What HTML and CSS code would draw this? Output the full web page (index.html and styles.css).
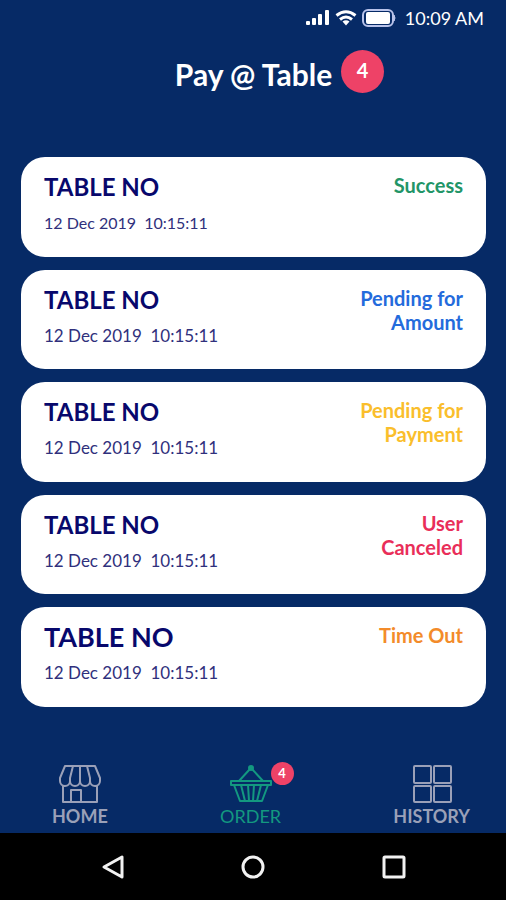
FILE: index.html
```html
<!DOCTYPE html>
<html lang="en">
<head>
<meta charset="utf-8">
<meta name="viewport" content="width=device-width, initial-scale=1">
<title>Pay @ Table</title>
<link rel="stylesheet" href="styles.css">
</head>
<body>
<div class="app">
  <div class="status-bar">
    <svg width="26" height="18" viewBox="0 0 26 18" fill="#fff" aria-hidden="true"><rect x="1" y="12" width="4" height="4" rx="1"/><rect x="7" y="9" width="4" height="7" rx="1"/><rect x="13" y="5" width="4" height="11" rx="1"/><rect x="20" y="1" width="4" height="15" rx="1"/></svg>
    <svg width="22" height="18" viewBox="0 0 22 18" fill="none" stroke="#fff" stroke-width="3" aria-hidden="true"><path d="M1.500 6.500Q11-1 20.500 6.500M5 10.500Q11 5.500 17 10.500"/><path d="M7.500 12.500Q11 10 14.500 12.500L11 16.500Z" fill="#fff" stroke="none"/></svg>
    <svg width="36" height="20" viewBox="0 0 36 20" aria-hidden="true"><rect x="2" y="2" width="30" height="16" rx="5" fill="none" stroke="#b9c3ea" stroke-width="2"/><rect x="5" y="4" width="24" height="12" rx="2" fill="#fff"/><path d="M33 7q2 3 0 6z" fill="#b9c3ea" stroke="#b9c3ea"/></svg>
    <span class="clock">10:09 AM</span>
  </div>
  <header class="header">
    <h1 class="title">Pay @ Table</h1>
    <span class="badge">4</span>
  </header>
  <main class="orders">
    <article class="card">
      <div class="details"><h2 class="name">TABLE NO</h2><p class="date date-compact">12 Dec 2019&nbsp; 10:15:11</p></div>
      <p class="state success">Success</p>
    </article>
    <article class="card">
      <div class="details"><h2 class="name">TABLE NO</h2><p class="date">12 Dec 2019&nbsp; 10:15:11</p></div>
      <p class="state amount">Pending for Amount</p>
    </article>
    <article class="card">
      <div class="details"><h2 class="name">TABLE NO</h2><p class="date">12 Dec 2019&nbsp; 10:15:11</p></div>
      <p class="state payment">Pending for Payment</p>
    </article>
    <article class="card">
      <div class="details"><h2 class="name">TABLE NO</h2><p class="date">12 Dec 2019&nbsp; 10:15:11</p></div>
      <p class="state canceled">User<br>Canceled</p>
    </article>
    <article class="card">
      <div class="details"><h2 class="name name-large">TABLE NO</h2><p class="date">12 Dec 2019&nbsp; 10:15:11</p></div>
      <p class="state timeout">Time Out</p>
    </article>
  </main>
  <nav class="tabs" aria-label="Main">
    <a class="tab" href="#home">
      <svg width="44" height="40" viewBox="0 0 44 40" fill="none" stroke="currentColor" stroke-width="2" stroke-linejoin="round" aria-hidden="true"><path d="M7 2H37L42 14V17A5 5 0 0 1 32 17A5 5 0 0 1 22 17A5 5 0 0 1 12 17A5 5 0 0 1 2 17V14ZM15 2L12 14V17M22 2V17M29 2L32 14V17M5 22V38H39V22M13 38V26H23V38"/></svg>
      <span>HOME</span>
    </a>
    <a class="tab active" href="#order">
      <span class="icon-box">
        <svg width="44" height="40" viewBox="0 0 44 40" fill="none" stroke="currentColor" stroke-width="2" stroke-linejoin="round" aria-hidden="true"><circle cx="22" cy="4" r="2" fill="currentColor"/><path d="M21 5L10 17M23 5L34 17M2 17H42V21H2ZM5 21L11 37H33L39 21M12 21L16 37M19 21L20 37M25 21L24 37M32 21L28 37"/></svg>
        <span class="tab-badge">4</span>
      </span>
      <span>ORDER</span>
    </a>
    <a class="tab" href="#history">
      <svg width="44" height="40" viewBox="0 0 44 40" fill="none" stroke="currentColor" stroke-width="2" aria-hidden="true"><rect x="4" y="2" width="17" height="17" rx="1"/><rect x="24" y="2" width="17" height="17" rx="1"/><rect x="4" y="22" width="17" height="16" rx="1"/><rect x="24" y="22" width="17" height="16" rx="1"/></svg>
      <span>HISTORY</span>
    </a>
  </nav>
  <div class="system-bar">
    <button class="key" type="button" aria-label="Back"><svg width="28" height="28" viewBox="0 0 28 28" aria-hidden="true"><path d="M6 14L24 4V24Z"/></svg></button>
    <button class="key" type="button" aria-label="Home"><svg width="28" height="28" viewBox="0 0 28 28" aria-hidden="true"><circle cx="14" cy="14" r="10"/></svg></button>
    <button class="key" type="button" aria-label="Recent apps"><svg width="28" height="28" viewBox="0 0 28 28" aria-hidden="true"><rect x="4" y="4" width="20" height="20" rx="1"/></svg></button>
  </div>
</div>
</body>
</html>
```
FILE: styles.css
```css
* {
  box-sizing: border-box;
}

body,
h1,
h2,
p {
  margin: 0;
}

body {
  background: #062a66;
  font-family: Lato, "Liberation Sans", sans-serif;
}

.app {
  display: flex;
  flex-direction: column;
  min-height: 100vh;
}

.status-bar {
  display: flex;
  align-items: center;
  justify-content: flex-end;
  gap: 4px;
  height: 36px;
  padding-right: 22px;
  color: #fff;
}

.clock {
  margin-left: 4px;
  font-size: 18px;
}

.header {
  display: flex;
  justify-content: center;
  gap: 9px;
  height: 121px;
  padding: 14px 0 0 53px;
  color: #fff;
}

.title {
  padding-top: 8px;
  font-size: 30px;
  font-weight: 700;
  line-height: 32px;
}

.badge {
  width: 43px;
  height: 43px;
  border-radius: 50%;
  background: #ee4267;
  font-size: 20px;
  font-weight: 700;
  line-height: 40px;
  text-align: center;
}

.orders {
  display: grid;
  flex: 1;
  grid-auto-rows: 1fr;
  gap: 13px;
  padding: 0 20px 0 21px;
}

.card {
  display: flex;
  justify-content: space-between;
  padding: 16px 23px;
  border-radius: 24px;
  background: #fff;
}

.name {
  color: #08086c;
  font-size: 24px;
  font-weight: 700;
  line-height: 28px;
}

.name-large {
  font-size: 27px;
}

.date {
  margin-top: 10px;
  color: #30307c;
  font-size: 17px;
  line-height: 24px;
}

.date-compact {
  font-size: 16px;
}

.state {
  width: 120px;
  font-size: 20px;
  font-weight: 700;
  line-height: 24px;
  text-align: right;
}

.success {
  color: #229567;
}

.amount {
  color: #246bdc;
}

.payment {
  color: #fabe2c;
}

.canceled {
  color: #e92e59;
}

.timeout {
  color: #f38b2a;
}

.tabs {
  display: flex;
  justify-content: space-between;
  height: 126px;
  padding: 57px 36px 0 52px;
}

.tab {
  display: flex;
  flex-direction: column;
  align-items: center;
  color: #9aa0b8;
  font-size: 18px;
  font-weight: 700;
  line-height: 24px;
  text-decoration: none;
}

.active {
  color: #139880;
  font-weight: 400;
}

.icon-box {
  position: relative;
  height: 40px;
}

.tab-badge {
  position: absolute;
  top: -2px;
  right: -21px;
  width: 23px;
  height: 23px;
  border-radius: 50%;
  background: #ee4267;
  color: #fff;
  font-size: 13px;
  font-weight: 700;
  line-height: 23px;
  text-align: center;
}

.system-bar {
  display: flex;
  align-items: center;
  justify-content: space-between;
  height: 67px;
  padding: 0 98px;
  background: #000;
}

.key {
  display: flex;
  padding: 0;
  border: 0;
  background: none;
}

.key svg {
  fill: none;
  stroke: #f2f2f2;
  stroke-width: 3px;
  stroke-linejoin: round;
}
```
